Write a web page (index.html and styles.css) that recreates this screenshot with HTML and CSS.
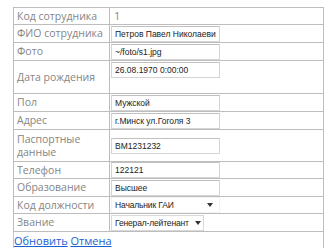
FILE: index.html
```html
<!DOCTYPE html>
<html lang="ru">
<head>
  <meta charset="UTF-8">
  <title>Сотрудник</title>
  <link rel="stylesheet" href="styles.css">
</head>
<body>
  <table class="details">
    <tr class="row">
      <td class="label">Код сотрудника</td>
      <td class="value"><span class="plain">1</span></td>
    </tr>
    <tr class="row high">
      <td class="label">ФИО сотрудника</td>
      <td class="value"><input class="field" type="text" value="Петров Павел Николаевич"></td>
    </tr>
    <tr class="row high">
      <td class="label">Фото</td>
      <td class="value"><input class="field" type="text" value="~/foto/s1.jpg"></td>
    </tr>
    <tr class="row tall">
      <td class="label">Дата рождения</td>
      <td class="value top"><input class="field" type="text" value="26.08.1970 0:00:00"></td>
    </tr>
    <tr class="row high">
      <td class="label">Пол</td>
      <td class="value"><input class="field" type="text" value="Мужской"></td>
    </tr>
    <tr class="row high">
      <td class="label">Адрес</td>
      <td class="value"><input class="field" type="text" value="г.Минск ул.Гоголя 3"></td>
    </tr>
    <tr class="row tall">
      <td class="label">Паспортные данные</td>
      <td class="value"><input class="field" type="text" value="ВМ1231232"></td>
    </tr>
    <tr class="row">
      <td class="label">Телефон</td>
      <td class="value"><input class="field" type="text" value="122121"></td>
    </tr>
    <tr class="row high">
      <td class="label">Образование</td>
      <td class="value"><input class="field" type="text" value="Высшее"></td>
    </tr>
    <tr class="row">
      <td class="label">Код должности</td>
      <td class="value">
        <span class="select wide"><span class="select-text">Начальник ГАИ</span><span class="arrow"></span></span>
      </td>
    </tr>
    <tr class="row high">
      <td class="label">Звание</td>
      <td class="value">
        <span class="select narrow"><span class="select-text">Генерал-лейтенант</span><span class="arrow"></span></span>
      </td>
    </tr>
    <tr class="commands">
      <td colspan="2"><a href="#">Обновить</a> <a href="#">Отмена</a></td>
    </tr>
  </table>
</body>
</html>
```

FILE: styles.css
```css
body { margin: 0; padding: 7px 0 0 13px; background: #fff; font-family: "Open Sans", "DejaVu Sans", sans-serif; }
.details { width: 311px; border-collapse: collapse; border: 1px solid #c4c4c4; }
.details td { padding: 0; border: 1px solid #bdbdbd; }
.row td { height: 16px; }
.row.high td { height: 17px; }
.row.tall td { height: 31px; }
.label { width: 92px; padding-left: 3px !important; font-size: 10.5px; color: #858585; line-height: 13px; vertical-align: middle; }
.value { padding-left: 1px !important; vertical-align: middle; line-height: 0; }
.value.top { vertical-align: top; padding-top: 1px !important; }
.plain { padding-left: 3px; font-size: 11px; line-height: 14px; color: #888; }
.field {
  display: block;
  box-sizing: border-box;
  width: 109px;
  height: 16px;
  margin: 0;
  padding: 0 3px;
  border: 1px solid #d4d4d4;
  border-top-color: #c0c0c0;
  font-family: "Liberation Sans", Arial, sans-serif;
  font-size: 8.5px;
  color: #222;
  background: #fff;
}
.select {
  display: flex;
  align-items: center;
  box-sizing: border-box;
  height: 16px;
  padding: 0 2px 0 3px;
  border: 1px solid #e0e0e0;
  font-family: "Liberation Sans", Arial, sans-serif;
  font-size: 8.5px;
  letter-spacing: -0.15px;
  line-height: 14px;
  color: #222;
  background: #fff;
}
.select.wide { width: 109px; padding-right: 6px; border-color: #f2f2f2; }
.select.narrow { width: 93px; border-color: #d8d8d8; }
.select-text { flex: 1; white-space: nowrap; overflow: hidden; }
.arrow { width: 0; height: 0; border-left: 3px solid transparent; border-right: 3px solid transparent; border-top: 4px solid #333; margin-left: 2px; }
.commands td { height: 18px; border-left: none; border-bottom: none; font-size: 11px; line-height: 18px; }
.commands a { color: #1a5fd0; text-decoration: underline; }
```
